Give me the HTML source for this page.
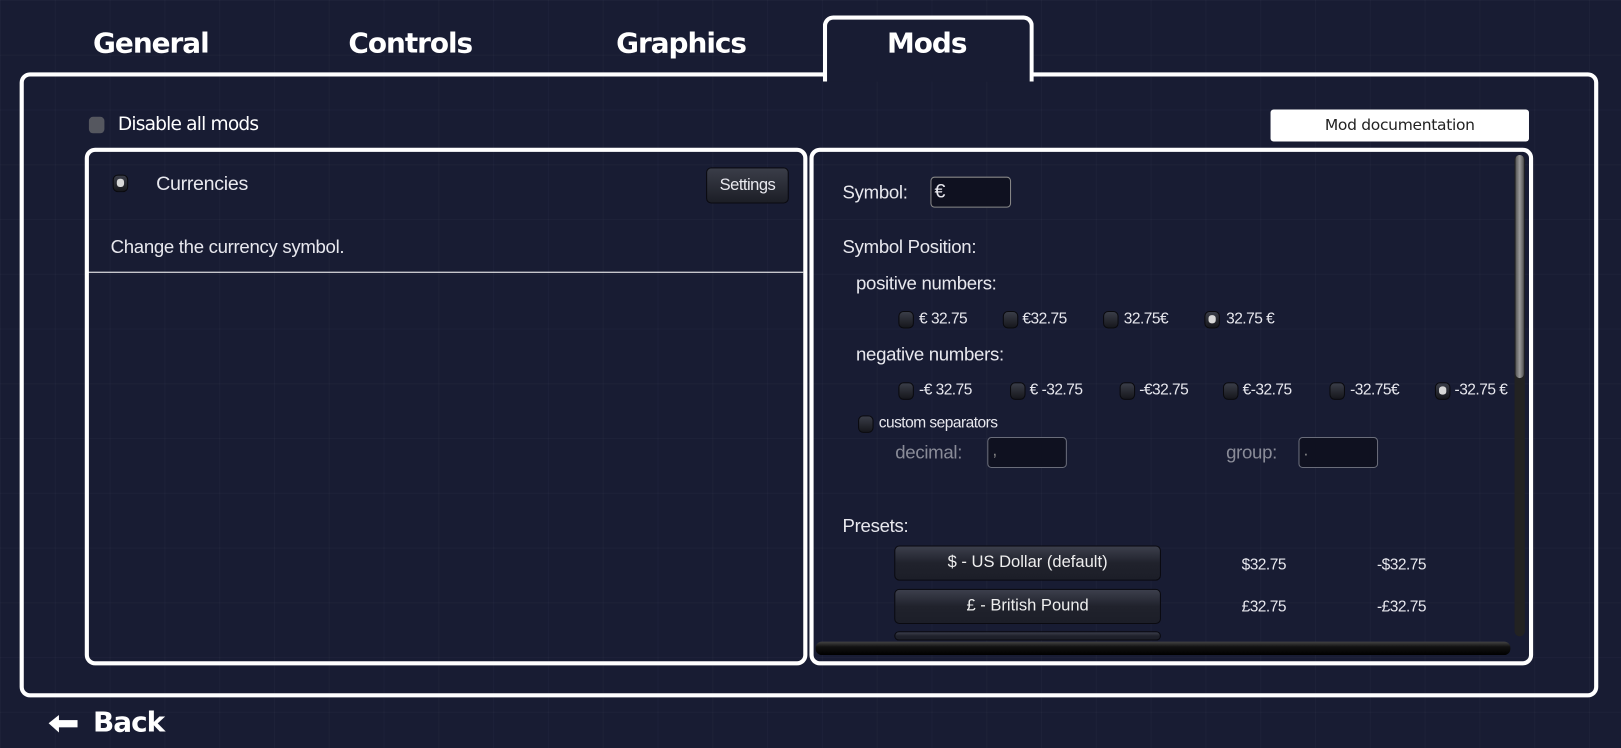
<!DOCTYPE html>
<html><head><meta charset="utf-8"><style>
html,body{margin:0;padding:0;width:1621px;height:748px;overflow:hidden;background:#181c33;}
#w{position:absolute;left:0;top:0;width:1568px;height:724px;transform:scale(1.03380,1.03315);transform-origin:0 0;font-family:"Liberation Sans",sans-serif;color:#e8e8ee;
background-color:#181c33;background-image:linear-gradient(rgba(255,255,255,0.025) 1px,transparent 1px),linear-gradient(90deg,rgba(255,255,255,0.025) 1px,transparent 1px);background-size:53px 53px;}
.a{position:absolute;}
.tab{position:absolute;top:27px;font-family:"DejaVu Sans",sans-serif;font-weight:bold;font-size:27px;color:#fff;letter-spacing:-1px;}
.box{position:absolute;border:4px solid #fff;border-radius:10px;}
.t{position:absolute;font-size:18px;white-space:nowrap;letter-spacing:-0.3px;}
.s{position:absolute;font-size:15px;white-space:nowrap;letter-spacing:-0.5px;}
.r{position:absolute;width:13px;height:15px;border-radius:5px;background:linear-gradient(#3a3d48,#16171c);border:1px solid #0a0a0e;}
.r.on::after{content:"";position:absolute;left:3px;top:3px;width:7px;height:8px;border-radius:3px;background:#d8d8d8;}
.in{position:absolute;border:1px solid #6a6d7a;border-radius:4px;background:#0f1120;}
.btn{position:absolute;width:256px;height:32px;border-radius:5px;background:linear-gradient(#3c3f4c,#20222c 50%,#1c1e28);border:1px solid #0a0a10;font-size:16px;text-align:center;line-height:32px;color:#eee;}
</style></head><body><div id="w">
<div class="tab" style="left:90px">General</div>
<div class="tab" style="left:337px">Controls</div>
<div class="tab" style="left:596px">Graphics</div>
<div class="box" style="left:19px;top:70px;width:1519px;height:597px;"></div>
<div class="a" style="left:796px;top:15px;width:196px;height:60px;border:4px solid #fff;border-bottom:none;border-radius:10px 10px 0 0;background:#181c33;z-index:2"></div>
<div class="tab" style="left:858px;z-index:3">Mods</div>
<div class="a" style="left:86px;top:113px;width:15px;height:16px;border-radius:4px;background:#55575f;"></div>
<div class="a" style="left:114px;top:110px;font-family:'DejaVu Sans',sans-serif;font-size:18px;color:#fff;letter-spacing:-0.8px">Disable all mods</div>
<div class="a" style="left:1229px;top:106px;width:250px;height:31px;background:#fff;border-radius:3px;color:#222;font-family:'DejaVu Sans',sans-serif;font-size:15px;text-align:center;line-height:31px;letter-spacing:-0.3px">Mod documentation</div>
<div class="box" style="left:82px;top:143px;width:691px;height:493px;"></div>
<div class="r on" style="left:109px;top:169px"></div>
<div class="t" style="left:151px;top:168px;font-size:19px">Currencies</div>
<div class="a" style="left:683px;top:162px;width:78px;height:33px;border-radius:5px;background:linear-gradient(#3a3d48,#1c1e26);border:1px solid #0a0a10;font-size:16px;text-align:center;line-height:33px;letter-spacing:-0.5px">Settings</div>
<div class="t" style="left:107px;top:229px">Change the currency symbol.</div>
<div class="a" style="left:84px;top:263px;width:693px;height:1px;background:#fff"></div>
<div class="box" style="left:783px;top:143px;width:692px;height:493px;"></div>
<div class="a" style="left:1465px;top:150px;width:10px;height:466px;background:#222;border-radius:5px"></div>
<div class="a" style="left:1466px;top:150px;width:8px;height:216px;background:linear-gradient(90deg,#555,#999,#555);border-radius:4px"></div>
<div class="a" style="left:789px;top:621px;width:672px;height:13px;background:linear-gradient(#444,#111 40%,#000);border-radius:6px"></div>
<div class="t" style="left:815px;top:176px">Symbol:</div>
<div class="in" style="left:900px;top:171px;width:76px;height:28px;border-color:#888"><span style="position:absolute;left:3px;top:3px;font-size:19px">€</span></div>
<div class="t" style="left:815px;top:229px">Symbol Position:</div>
<div class="t" style="left:828px;top:264px">positive numbers:</div>
<div class="r" style="left:869px;top:301px"></div><div class="s" style="left:889px;top:300px">€ 32.75</div>
<div class="r" style="left:970px;top:301px"></div><div class="s" style="left:989px;top:300px">€32.75</div>
<div class="r" style="left:1067px;top:301px"></div><div class="s" style="left:1087px;top:300px">32.75€</div>
<div class="r on" style="left:1165px;top:301px"></div><div class="s" style="left:1186px;top:300px">32.75 €</div>
<div class="t" style="left:828px;top:333px">negative numbers:</div>
<div class="r" style="left:869px;top:370px"></div><div class="s" style="left:889px;top:369px">-€ 32.75</div>
<div class="r" style="left:977px;top:370px"></div><div class="s" style="left:996px;top:369px">€ -32.75</div>
<div class="r" style="left:1083px;top:370px"></div><div class="s" style="left:1102px;top:369px">-€32.75</div>
<div class="r" style="left:1183px;top:370px"></div><div class="s" style="left:1202px;top:369px">€-32.75</div>
<div class="r" style="left:1286px;top:370px"></div><div class="s" style="left:1306px;top:369px">-32.75€</div>
<div class="r on" style="left:1388px;top:370px"></div><div class="s" style="left:1407px;top:369px;width:57px;overflow:hidden">-32.75 €</div>
<div class="r" style="left:830px;top:402px"></div><div class="s" style="left:850px;top:401px">custom separators</div>
<div class="t" style="left:866px;top:428px;color:#8a8c98">decimal:</div>
<div class="in" style="left:955px;top:423px;width:75px;height:28px"><span style="position:absolute;left:4px;top:4px;color:#888">,</span></div>
<div class="t" style="left:1186px;top:428px;color:#8a8c98">group:</div>
<div class="in" style="left:1256px;top:423px;width:75px;height:28px"><span style="position:absolute;left:4px;top:4px;color:#888">.</span></div>
<div class="t" style="left:815px;top:499px">Presets:</div>
<div class="btn" style="left:865px;top:528px">$ - US Dollar (default)</div>
<div class="s" style="left:1201px;top:538px">$32.75</div><div class="s" style="left:1332px;top:538px">-$32.75</div>
<div class="btn" style="left:865px;top:570px">£ - British Pound</div>
<div class="s" style="left:1201px;top:579px">£32.75</div><div class="s" style="left:1332px;top:579px">-£32.75</div>
<div class="btn" style="left:865px;top:611px;height:7px;overflow:hidden"></div>
<div class="a" style="left:56px;top:697px;width:19px;height:7px;background:#fff"></div>
<div class="a" style="left:47px;top:692px;width:0;height:0;border-top:8px solid transparent;border-bottom:9px solid transparent;border-right:10px solid #fff;"></div>
<div class="a" style="left:90px;top:684px;font-family:'DejaVu Sans',sans-serif;font-weight:bold;font-size:27px;color:#fff;letter-spacing:-1px">Back</div>
</div></body></html>
